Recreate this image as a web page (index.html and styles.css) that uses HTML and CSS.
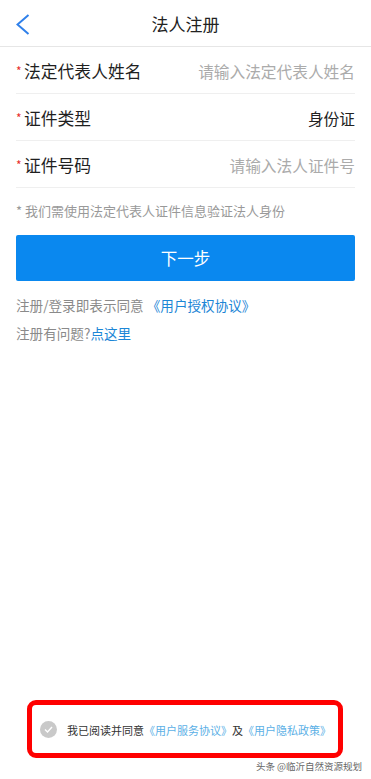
FILE: index.html
```html
<!DOCTYPE html>
<html lang="zh">
<head>
<meta charset="utf-8">
<title>法人注册</title>
<link rel="stylesheet" href="styles.css">
</head>
<body>
<div class="page">
  <header class="topbar">
    <svg class="back" width="14" height="22" viewBox="0 0 14 22"><polyline points="12.5,1 1.5,10.5 12.5,20" fill="none" stroke="#2f80ea" stroke-width="2"/></svg>
    <div class="title">法人注册</div>
  </header>
  <main class="form">
    <div class="row">
      <div class="label"><span class="req">*</span>法定代表人姓名</div>
      <div class="ph">请输入法定代表人姓名</div>
    </div>
    <div class="row">
      <div class="label"><span class="req">*</span>证件类型</div>
      <div class="val">身份证</div>
    </div>
    <div class="row">
      <div class="label"><span class="req">*</span>证件号码</div>
      <div class="ph">请输入法人证件号</div>
    </div>
    <p class="note">* 我们需使用法定代表人证件信息验证法人身份</p>
    <button class="next">下一步</button>
    <p class="info">注册/登录即表示同意 <span class="link">《用户授权协议》</span></p>
    <p class="info second">注册有问题?<span class="link">点这里</span></p>
  </main>
  <footer class="foot">
    <div class="agree">
      <span class="check"><svg width="9" height="7" viewBox="0 0 9 7"><polyline points="1,3.5 3.5,6 8,1" fill="none" stroke="#fff" stroke-width="1.4"/></svg></span>
      <span class="agree-text">我已阅读并同意<span class="lk">《用户服务协议》</span>及<span class="lk">《用户隐私政策》</span></span>
    </div>
    <div class="mark">头条 @临沂自然资源规划</div>
  </footer>
</div>
</body>
</html>
```
FILE: styles.css
```css
html, body { margin: 0; padding: 0; background: #fff; }
body { font-family: "Noto Sans CJK SC", "Noto Sans", sans-serif; color: #222; }
.page { min-height: 779px; display: flex; flex-direction: column; }
.topbar { height: 46px; border-bottom: 1px solid #e6e6e6; display: flex; align-items: center; justify-content: center; position: relative; }
.back { position: absolute; left: 16px; top: 14px; }
.title { font-size: 17px; line-height: 46px; padding-top: 2px; color: #222; }
.form { padding: 0 16px 0 16px; }
.row { height: 46px; border-bottom: 1px solid #efefef; display: flex; align-items: center; justify-content: space-between; }
.label { font-size: 16.8px; color: #1f1f1f; display: flex; align-items: center; padding-top: 2px; }
.req { color: #e8302c; font-size: 12px; line-height: 12px; width: 8px; margin-top: 0; }
.ph { font-size: 15.7px; color: #ababab; padding-top: 2px; }
.val { font-size: 15.7px; color: #222; padding-top: 2px; }
.note { margin: 13px 0 0; font-size: 13px; line-height: 20px; color: #999; }
.next { display: block; width: 100%; height: 46px; margin-top: 14px; border: 0; border-radius: 2px; background: #0a88ef; color: #fff; font-family: inherit; font-size: 16.5px; }
.info { margin: 14px 0 0; font-size: 13.6px; line-height: 20px; color: #8a8a8a; }
.info.second { margin-top: 8px; }
.link { color: #1c86d6; }
.foot { margin-top: auto; }
.agree { margin: 0 28px 0 27px; height: 48px; border: 5px solid #ff0000; border-radius: 9px; display: flex; align-items: center; padding-left: 8px; }
.check { width: 17px; height: 17px; border-radius: 50%; background: #c9c9c9; display: flex; align-items: center; justify-content: center; margin-right: 10px; }
.agree-text { font-size: 11px; color: #333; padding-top: 1px; }
.lk { color: #5bb0e6; }
.mark { text-align: right; padding-right: 9px; font-size: 9.5px; line-height: 14px; margin-top: 1px; padding-bottom: 6px; color: #666; }
```
